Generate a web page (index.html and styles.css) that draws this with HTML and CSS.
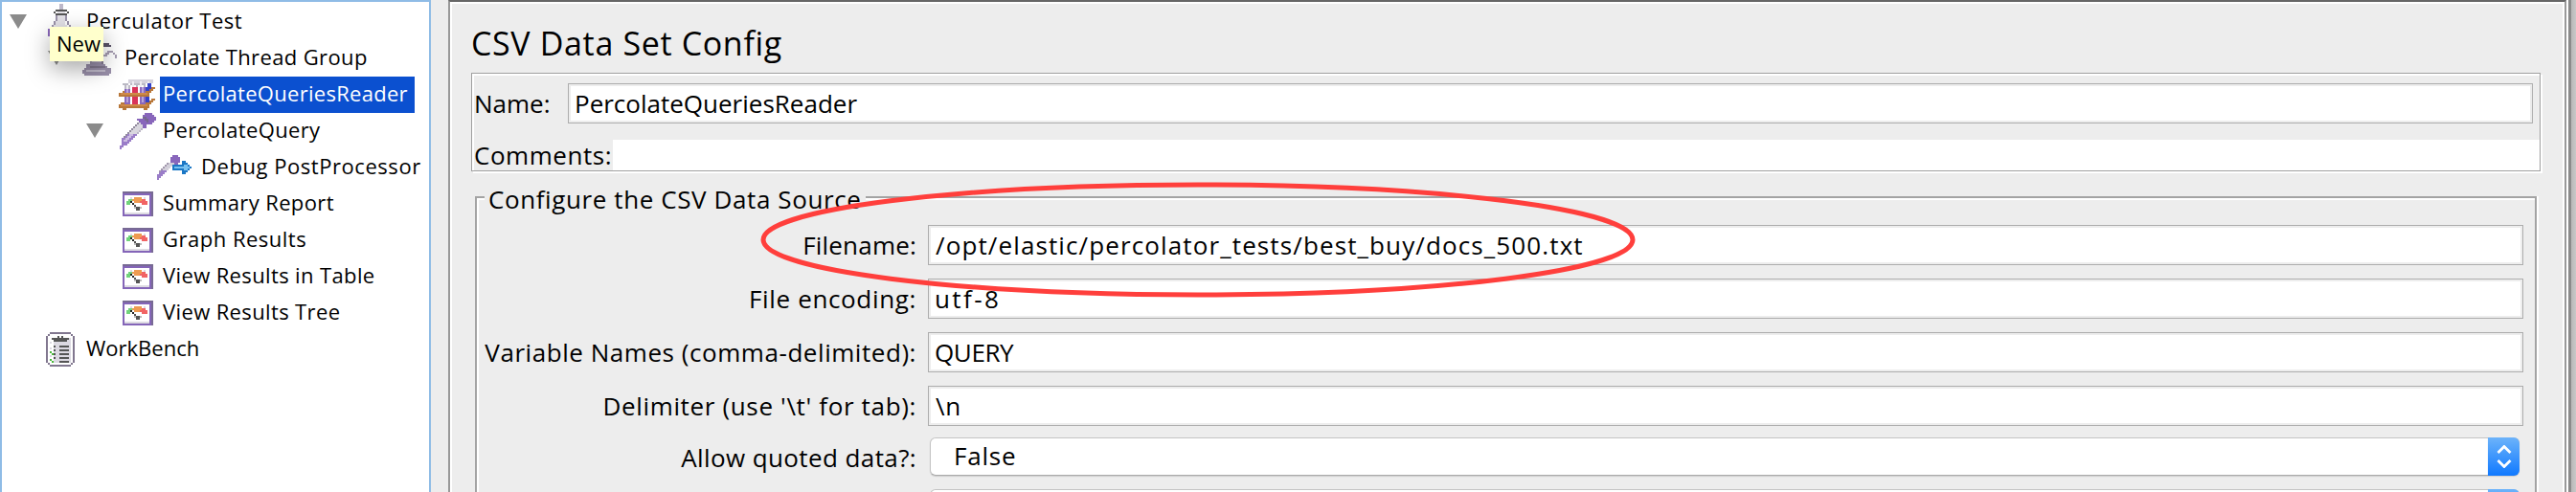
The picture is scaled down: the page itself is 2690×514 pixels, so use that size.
FILE: index.html
```html
<!DOCTYPE html>
<html lang="en">
<head>
<meta charset="utf-8">
<title>CSV Data Set Config</title>
<link rel="stylesheet" href="styles.css">
</head>
<body>
<svg class="defs" aria-hidden="true">
  <symbol id="twisty" viewBox="0 0 20 20"><path d="M1 2H19L10 17Z" fill="#8b8b8b"/></symbol>
  <symbol id="gauge" viewBox="0 0 16 13" shape-rendering="crispEdges">
    <path fill="#8465b8" d="M0 0h16v13H0z"/><path fill="#786a94" d="M0 0h16v1H0zM15 0h1v13h-1z"/>
    <path fill="#fff" d="M1 2h13v10H1z"/><path fill="#dddbe2" d="M1 11h13v1H1zM4 3h1v1H4zM11 3h1v1h-1z"/>
    <path fill="#72d37c" d="M3 4h2v1H3zM2 5h3v1H2zM2 6h2v1H2z"/>
    <path fill="#ee9b51" d="M6 3h4v1H6zM5 4h6v1H5zM6 5h4v1H6z"/>
    <path fill="#f16364" d="M10 4h2v1h-2zM9 5h4v1H9zM10 6h3v1h-3z"/>
    <path fill="#222" d="M4 5h1v1H4zM5 6h1v1H5z"/><path fill="#555" d="M6 7h1v1H6zM7 8h2v2H7z"/><path fill="#bbb" d="M6 8h1v1H6zM9 8h1v1H9z"/>
  </symbol>
  <symbol id="rack" viewBox="0 0 19 16" shape-rendering="crispEdges">
    <path fill="#d5d2dc" d="M5 0h13v2H5z"/><path fill="#bbb9c4" d="M2 2h3v1H2zM6 2h3v1H6zM10 2h3v1h-3zM3 3h1v3H3zM5 3h1v3H5zM9 2h1v2H9zM13 2h1v2h-1z"/>
    <path fill="#efedf2" d="M4 3h1v3H4zM7 1h1v3H7zM11 1h1v3h-1zM15 1h1v2h-1z"/>
    <path fill="#8a68bd" d="M3 5h3v2H3zM3 9h3v4H3zM11 4h3v3h-3zM11 9h3v4h-3z"/>
    <path fill="#b9a5db" d="M4 5h1v2H4zM4 9h1v3H4zM12 4h1v3h-1zM12 9h1v3h-1z"/>
    <path fill="#d9335a" d="M7 4h3v3H7zM7 9h3v4H7z"/><path fill="#3341c9" d="M14 4h1v3h-1zM15 2h2v4h-2zM14 9h2v3h-2z"/>
    <path fill="#b87739" d="M2 6h1v1H2zM17 4h2v1h-2zM16 5h2v1h-2zM14 6h3v1h-3zM0 7h16v2H0zM17 10h2v1h-2zM16 11h2v1h-2zM1 12h2v1H1zM14 12h3v1h-3zM0 13h16v2H0zM2 15h2v1H2zM13 15h2v1h-2z"/>
    <path fill="#d08a48" d="M1 7h14v1H1zM1 13h14v1H1z"/>
  </symbol>
  <symbol id="dropper" viewBox="0 0 19 19" shape-rendering="crispEdges">
    <path fill="#d9d7de" d="M9 5h3v1H9zM8 6h5v1H8zM7 7h6v1H7zM6 8h6v1H6zM5 9h6v1H5zM4 10h6v1H4z"/>
    <path fill="#9a7dc8" d="M3 11h6v1H3zM2 12h6v1H2zM1 13h6v1H1zM1 14h5v1H1zM1 15h4v1H1zM1 16h3v1H1zM0 17h2v1H0zM0 18h1v1H0z"/>
    <path fill="#cdbde2" d="M5 11h2v1H5zM4 12h2v1H4zM3 13h2v1H3zM2 14h2v1H2z"/>
    <path fill="#918a9d" d="M9 5h1v1H9zM8 6h1v1H8zM7 7h1v1H7zM6 8h1v1H6zM5 9h1v1H5zM4 10h1v1H4zM3 11h1v1H3zM2 12h1v1H2z"/>
    <path fill="#bbb6c5" d="M12 7h1v1h-1zM11 8h1v1h-1zM10 9h1v1h-1zM9 10h1v1H9z"/>
    <path fill="#8866bb" d="M13 0h4v1h-4zM12 1h6v1h-6zM12 2h7v1h-7zM9 3h10v1H9zM10 4h8v1h-8zM11 5h6v1h-6zM12 6h2v2h-2z"/>
    <path fill="#76698f" d="M12 2h2v1h-2zM13 3h2v1h-2zM14 4h1v1h-1z"/>
  </symbol>
  <symbol id="post" viewBox="0 0 19 13" shape-rendering="crispEdges">
    <path fill="#d3d0da" d="M5 4h4v1H5zM4 5h4v1H4zM3 6h4v1H3zM3 7h3v1H3z"/>
    <path fill="#9a7dc8" d="M2 8h3v1H2zM1 9h3v1H1zM0 10h3v1H0zM0 11h2v1H0zM0 12h1v1H0z"/>
    <path fill="#a298ad" d="M5 4h1v1H5zM4 5h1v1H4zM3 6h1v1H3zM2 7h1v1H2zM1 8h1v1H1z"/>
    <path fill="#8866bb" d="M8 0h3v1H8zM7 1h5v1H7zM7 2h5v1H7zM7 3h5v1H7zM9 4h2v1H9z"/>
    <path fill="#1b77c5" d="M8 5h5V3h2v1h1v1h1v1h1v1h-1v1h-1v1h-1v1h-2V8H8z"/><path fill="#79c2f1" d="M9 6h8v1H9zM14 5h2v1h-2zM14 7h2v1h-2z"/>
  </symbol>
  <symbol id="flask" viewBox="0 0 16 19" shape-rendering="crispEdges">
    <path fill="#bdb8c9" d="M7 0h2v3H7z"/><path fill="#555" d="M5 3h6v1H5zM4 4h1v1H4zM11 4h1v1h-1zM5 5h6v1H5z"/>
    <path fill="#e3e1e7" d="M6 4h4v1H6zM6 6h4v5h1v3H4v-3h1V8h1z"/>
    <path fill="#9b93aa" d="M5 6h1v3H5zM10 6h1v3h-1zM4 9h1v2H4zM11 9h1v2h-1zM3 11h1v2H3zM12 11h1v2h-1z"/>
    <path fill="#8a68bd" d="M1 13h12v4H1z"/>
  </symbol>
  <symbol id="spool" viewBox="0 0 18 18" shape-rendering="crispEdges">
    <path fill="#9a90aa" d="M2 1h11v2H2zM4 3h7v10H4zM2 12h10v1h1v1h2v3h-1v1H1v-1H0v-2h1v-1h1z"/>
    <path fill="#5b5469" d="M9 1h5v1h1v1h-4V2H9z"/><path fill="#c1bbcb" d="M5 7h5v1H5zM5 10h5v1H5zM2 15h10v1H2z"/>
    <path fill="#82788f" d="M10 3h1v9h-1zM4 13h8v1H4z"/>
    <path fill="#a79eb3" d="M13 5h3v1h-3zM12 6h2v1h-2zM16 6h1v1h-1zM17 7h1v2h-1zM11 7h2v1h-2z"/>
  </symbol>
  <symbol id="clipboard" viewBox="0 0 15 18" shape-rendering="crispEdges">
    <path fill="#81778f" d="M2 0h11v1h1v1h1v14h-1v1h-1v1H2v-1H1v-1H0V2h1V1h1z"/><path fill="#fff" d="M2 1h11v1h1v14h-1v1H2v-1H1V2h1z"/>
    <path fill="#dcd9e2" d="M4 3h9v13H4zM2 5h1v1H2zM2 8h1v1H2zM2 12h1v1H2z"/><path fill="#555" d="M6 2h1v1H6zM8 2h1v1H8zM3 3h9v1H3zM4 4h7v1H4zM7 7h5v1H7zM7 9h5v1H7zM7 11h5v1H7zM7 13h5v1H7zM7 15h5v1H7zM4 7h1v1H4zM4 9h1v1H4zM4 11h1v1H4zM4 13h1v1H4z"/>
    <path fill="#49b83a" d="M2 10h1v1H2zM3 11h1v1H3zM2 14h1v1H2zM3 15h1v1H3z"/>
  </symbol>
</svg>

<main class="window">
  <nav class="sidebar">
    <div class="tree-row"><svg class="twisty"><use href="#twisty"/></svg><span class="icon"><svg width="32" height="38"><use href="#flask"/></svg></span><span class="tree-label">Perculator Test</span></div>
    <div class="tree-row depth-1"><svg class="twisty"><use href="#twisty"/></svg><span class="icon"><svg width="36" height="36"><use href="#spool"/></svg></span><span class="tree-label">Percolate Thread Group</span></div>
    <div class="tree-row depth-2 leaf"><span class="icon pulled"><svg width="38" height="32"><use href="#rack"/></svg></span><span class="tree-label selected">PercolateQueriesReader</span></div>
    <div class="tree-row depth-2"><svg class="twisty"><use href="#twisty"/></svg><span class="icon"><svg width="38" height="38"><use href="#dropper"/></svg></span><span class="tree-label">PercolateQuery</span></div>
    <div class="tree-row depth-3 leaf"><span class="icon pulled"><svg width="38" height="26"><use href="#post"/></svg></span><span class="tree-label">Debug PostProcessor</span></div>
    <div class="tree-row depth-2 leaf"><span class="icon"><svg width="32" height="26"><use href="#gauge"/></svg></span><span class="tree-label">Summary Report</span></div>
    <div class="tree-row depth-2 leaf"><span class="icon"><svg width="32" height="26"><use href="#gauge"/></svg></span><span class="tree-label">Graph Results</span></div>
    <div class="tree-row depth-2 leaf"><span class="icon"><svg width="32" height="26"><use href="#gauge"/></svg></span><span class="tree-label">View Results in Table</span></div>
    <div class="tree-row depth-2 leaf"><span class="icon"><svg width="32" height="26"><use href="#gauge"/></svg></span><span class="tree-label">View Results Tree</span></div>
    <div class="tree-row leaf"><span class="icon pulled"><svg width="30" height="36"><use href="#clipboard"/></svg></span><span class="tree-label">WorkBench</span></div>
    <div class="tooltip">New</div>
  </nav>

  <section class="editor">
    <h1 class="title">CSV Data Set Config</h1>
    <div class="meta">
      <div class="name-row"><span class="name-label">Name:</span><div class="field name-field">PercolateQueriesReader</div></div>
      <div class="comment-row"><span class="comment-label">Comments:</span><div class="comment-field"></div></div>
    </div>
    <fieldset class="source">
      <legend class="legend">Configure the CSV Data Source</legend>
      <div class="form-row"><span class="label label-file">Filename:</span><div class="field path">/opt/elastic/percolator_tests/best_buy/docs_500.txt</div></div>
      <div class="form-row"><span class="label label-encoding">File encoding:</span><div class="field encoding">utf-8</div></div>
      <div class="form-row"><span class="label">Variable Names (comma-delimited):</span><div class="field variables">QUERY</div></div>
      <div class="form-row"><span class="label label-delimiter">Delimiter (use '\t' for tab):</span><div class="field delimiter">\n</div></div>
      <div class="form-row combo-row"><span class="label label-quoted">Allow quoted data?:</span><div class="combo"><span class="combo-value">False</span><span class="stepper"><svg width="16" height="24" viewBox="0 0 16 24"><path d="M1.500 8L8 1.500L14.500 8M1.500 16L8 22.500L14.500 16" fill="none" stroke="#fff" stroke-width="2.800"/></svg></span></div></div>
      <div class="form-row combo-row"><span class="label"></span><div class="combo"><span class="combo-value"></span><span class="stepper"></span></div></div>
    </fieldset>
  </section>
  <div class="window-edge"></div>
  <svg class="highlight" width="920" height="126" viewBox="0 0 920 126"><ellipse cx="460" cy="63.500" rx="454" ry="57.500" fill="none" stroke="#ff3f3c" stroke-width="5"/></svg>
</main>
</body>
</html>
```

FILE: styles.css
```css
* { box-sizing: border-box; }
body {
  margin: 0;
  overflow: hidden;
  background: #ededed;
  color: #000;
  font-family: "Open Sans", "Noto Sans", sans-serif;
}
.defs { position: absolute; width: 0; height: 0; }
.window { position: relative; display: flex; width: 2690px; height: 514px; overflow: hidden; }

.sidebar {
  position: relative;
  flex: none;
  width: 450px;
  height: 514px;
  padding-top: 2px;
  background: #fff;
  border: 2px solid #8fbce6;
  border-bottom: 0;
}
.tree-row { display: flex; align-items: center; height: 38px; padding-left: 7px; }
.depth-1 { padding-left: 47px; }
.depth-2 { padding-left: 87px; }
.depth-3 { padding-left: 127px; }
.twisty { flex: none; width: 20px; height: 20px; }
.icon { display: flex; flex: none; align-items: center; justify-content: center; width: 46px; height: 38px; margin-left: 12px; }
.leaf .icon { margin-left: 32px; }
.pulled { padding-right: 2px; }
.tree-label {
  height: 38px;
  padding: 0 7px 0 3px;
  font-size: 22px;
  line-height: 35px;
  letter-spacing: 0.37px;
  white-space: pre;
}
.tree-row:nth-child(1) .tree-label,
.tree-row:nth-child(5) .tree-label { letter-spacing: 0.55px; }
.tree-row:nth-child(7) .tree-label { letter-spacing: 0.5px; }
.tree-row:nth-child(10) .tree-label { letter-spacing: 0; }
.tree-label.selected { color: #fff; background: #0b50d0; letter-spacing: 0.28px; }
.tooltip {
  position: absolute;
  left: 50px;
  top: 26px;
  width: 56px;
  height: 36px;
  padding-left: 7px;
  background: #ffffcc;
  box-shadow: 0 8px 24px rgba(0, 0, 0, 0.35);
  font-size: 22px;
  line-height: 35px;
}

.editor {
  flex: none;
  width: 2212px;
  height: 514px;
  margin-left: 18px;
  padding: 0 24px 0 22px;
  border: 2px solid #999;
  border-top-color: #666;
  border-bottom: 0;
  box-shadow: inset 2px 2px #fff, inset -2px 0 #fff;
}
.title { height: 74px; margin: 0; font-size: 34px; font-weight: 400; line-height: 86px; letter-spacing: 0.65px; white-space: pre; }
.meta {
  height: 103px;
  width: 2161px;
  padding-left: 2px;
  border: 1px solid #a0a0a0;
  box-shadow: inset 2px 2px #fff, 2px 2px #fff;
  font-size: 26px;
}
.name-row { display: flex; height: 69px; padding-top: 10px; }
.name-label { width: 98px; line-height: 42px; }
.field {
  height: 42px;
  padding-left: 6px;
  background: #fff;
  border: 1px solid #adadad;
  box-shadow: inset 0 0 0 2px #ededed;
  font-size: 26px;
  line-height: 40px;
  white-space: pre;
}
.name-field { width: 2052px; }
.comment-row { display: flex; height: 32px; }
.comment-label { width: 145px; line-height: 32px; letter-spacing: 0.55px; }
.comment-field { flex: 1; background: #fff; }

.source {
  width: 2153px;
  height: 340px;
  margin: 13px 0 0 4px;
  padding: 15px 0 0;
  border: 2px solid #a3a3a3;
  box-shadow: inset 2px 2px #fff, 2px 0 #fff;
}
.legend {
  height: 28px;
  margin-left: 8px;
  padding: 0 5px 0 4px;
  background: #ededed;
  font-size: 26px;
  line-height: 32px;
  letter-spacing: 0.6px;
  white-space: pre;
}
.form-row { display: flex; height: 56px; }
.label { width: 459px; margin-right: 12px; text-align: right; font-size: 26px; line-height: 42px; letter-spacing: 0.55px; white-space: pre; }
.label-file { letter-spacing: 0.2px; }
.label-encoding,
.label-delimiter { letter-spacing: 0.65px; }
.label-quoted { letter-spacing: 0.4px; }
.form-row .field { width: 1666px; }
.form-row .path { padding-left: 7px; letter-spacing: 1.12px; }
.encoding { letter-spacing: 2.4px; }
.variables { padding-left: 6px; letter-spacing: -0.4px; }
.delimiter { padding-left: 7px; letter-spacing: 0.8px; }
.combo-row { position: relative; top: -2px; height: 54px; }
.combo {
  display: flex;
  width: 1660px;
  height: 40px;
  margin-left: 2px;
  background: #fff;
  border: 1px solid #c4c4c4;
  border-bottom-color: #aaa;
  border-radius: 6px;
  box-shadow: 0 1px 1px #ccc;
}
.combo-value { flex: 1; padding-left: 24px; font-size: 26px; line-height: 36px; letter-spacing: 0.8px; }
.stepper {
  display: flex;
  align-items: center;
  justify-content: center;
  width: 33px;
  height: 40px;
  margin: -1px -1px 0 0;
  border-radius: 0 6px 6px 0;
  background: linear-gradient(#6cb3fa, #1079ff);
}
.window-edge {
  flex: none;
  width: 10px;
  height: 514px;
  border-left: 2px solid #fff;
  background: linear-gradient(90deg, #8b8b8b 3px, #b8b8b8 3px, #c8c8c8);
}
.highlight { position: absolute; left: 791px; top: 187px; }
```
